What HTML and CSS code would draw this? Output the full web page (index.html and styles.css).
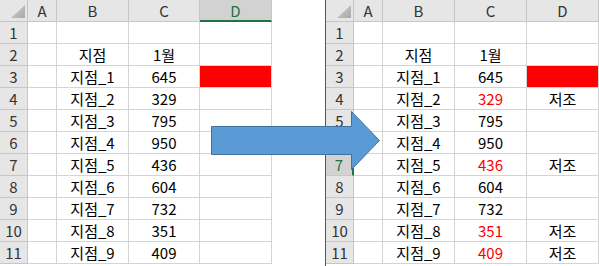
FILE: index.html
```html
<!DOCTYPE html>
<html lang="ko">
  <head>
    <meta charset="UTF-8" />
    <meta name="viewport" content="width=device-width, initial-scale=1.0" />
    <title>지점별 실적</title>
    <link rel="stylesheet" href="styles.css">
  </head>
  <body>
    <div class="page">
      <!-- before: plain sheet -->
      <div class="sheet">
        <div class="corner"><span class="corner-mark"></span></div>
        <div class="col-head">A</div>
        <div class="col-head">B</div>
        <div class="col-head">C</div>
        <div class="col-head selected">D</div>

        <div class="row-head">1</div><div class="cell"></div><div class="cell"></div><div class="cell"></div><div class="cell"></div>
        <div class="row-head">2</div><div class="cell"></div><div class="cell">지점</div><div class="cell">1월</div><div class="cell"></div>
        <div class="row-head">3</div><div class="cell"></div><div class="cell">지점_1</div><div class="cell">645</div><div class="cell fill-red"></div>
        <div class="row-head">4</div><div class="cell"></div><div class="cell">지점_2</div><div class="cell">329</div><div class="cell"></div>
        <div class="row-head">5</div><div class="cell"></div><div class="cell">지점_3</div><div class="cell">795</div><div class="cell"></div>
        <div class="row-head">6</div><div class="cell"></div><div class="cell">지점_4</div><div class="cell">950</div><div class="cell"></div>
        <div class="row-head">7</div><div class="cell"></div><div class="cell">지점_5</div><div class="cell">436</div><div class="cell"></div>
        <div class="row-head">8</div><div class="cell"></div><div class="cell">지점_6</div><div class="cell">604</div><div class="cell"></div>
        <div class="row-head">9</div><div class="cell"></div><div class="cell">지점_7</div><div class="cell">732</div><div class="cell"></div>
        <div class="row-head">10</div><div class="cell"></div><div class="cell">지점_8</div><div class="cell">351</div><div class="cell"></div>
        <div class="row-head">11</div><div class="cell"></div><div class="cell">지점_9</div><div class="cell">409</div><div class="cell"></div>
      </div>

      <!-- after: low values marked -->
      <div class="sheet sheet-after">
        <div class="corner"><span class="corner-mark"></span></div>
        <div class="col-head">A</div>
        <div class="col-head">B</div>
        <div class="col-head">C</div>
        <div class="col-head">D</div>

        <div class="row-head">1</div><div class="cell"></div><div class="cell"></div><div class="cell"></div><div class="cell"></div>
        <div class="row-head">2</div><div class="cell"></div><div class="cell">지점</div><div class="cell">1월</div><div class="cell"></div>
        <div class="row-head">3</div><div class="cell"></div><div class="cell">지점_1</div><div class="cell">645</div><div class="cell fill-red"></div>
        <div class="row-head">4</div><div class="cell"></div><div class="cell">지점_2</div><div class="cell low">329</div><div class="cell">저조</div>
        <div class="row-head">5</div><div class="cell"></div><div class="cell">지점_3</div><div class="cell">795</div><div class="cell"></div>
        <div class="row-head">6</div><div class="cell"></div><div class="cell">지점_4</div><div class="cell">950</div><div class="cell"></div>
        <div class="row-head selected">7</div><div class="cell"></div><div class="cell">지점_5</div><div class="cell low">436</div><div class="cell">저조</div>
        <div class="row-head">8</div><div class="cell"></div><div class="cell">지점_6</div><div class="cell">604</div><div class="cell"></div>
        <div class="row-head">9</div><div class="cell"></div><div class="cell">지점_7</div><div class="cell">732</div><div class="cell"></div>
        <div class="row-head">10</div><div class="cell"></div><div class="cell">지점_8</div><div class="cell low">351</div><div class="cell">저조</div>
        <div class="row-head">11</div><div class="cell"></div><div class="cell">지점_9</div><div class="cell low">409</div><div class="cell">저조</div>
      </div>

      <!-- block arrow drawn over both sheets -->
      <svg class="arrow" width="172" height="62" viewBox="0 0 172 62">
        <polygon points="0.5,15.5 140.5,15.5 140.5,0.5 168.5,29.5 140.5,58.5 140.5,43.5 0.5,43.5"
                 fill="#5b9bd5" stroke="#41719c" stroke-width="1" />
      </svg>
    </div>
  </body>
</html>
```

FILE: styles.css
```css
body {
  margin: 0;
  padding: 0;
  background: #ffffff;
  font-family: "Noto Sans CJK KR", "Noto Sans", sans-serif;
  font-size: 15px;
  color: #000000;
}
.page {
  position: relative;
  display: flex;
  align-items: flex-start;
  width: 599px;
  height: 266px;
}
.sheet {
  display: grid;
  grid-template-columns: 28px 29px 72px 71px 72px;
  grid-auto-rows: 22px;
}
.sheet-after {
  margin-left: 53px;
  border-left: 1px solid #217346;
  grid-template-columns: 28px 29px 72px 72px 72px;
  padding-bottom: 2px;
}
.sheet > div {
  box-sizing: border-box;
  border-right: 1px solid #d4d4d4;
  border-bottom: 1px solid #d4d4d4;
  line-height: 22px;
  text-align: center;
  white-space: nowrap;
  overflow: hidden;
}
.corner,
.col-head,
.row-head {
  background: #e6e6e6;
  color: #333333;
}
.sheet > .corner,
.sheet > .col-head,
.sheet > .row-head {
  border-color: #c6c6c6;
}
.corner {
  position: relative;
}
.corner-mark {
  position: absolute;
  right: 2px;
  bottom: 3px;
  width: 14px;
  height: 13px;
  background: linear-gradient(135deg, #d0d0d0, #a8a8a8);
  clip-path: polygon(100% 0, 100% 100%, 0 100%);
}
.sheet > .col-head.selected {
  background: #d2d2d2;
  color: #217346;
  border-bottom: 2px solid #217346;
}
.sheet > .row-head.selected {
  background: #d2d2d2;
  color: #217346;
  border-right: 2px solid #217346;
}
.fill-red {
  background: #ff0000;
}
.low {
  color: #ff0000;
}
.arrow {
  position: absolute;
  left: 211px;
  top: 111px;
}
```
